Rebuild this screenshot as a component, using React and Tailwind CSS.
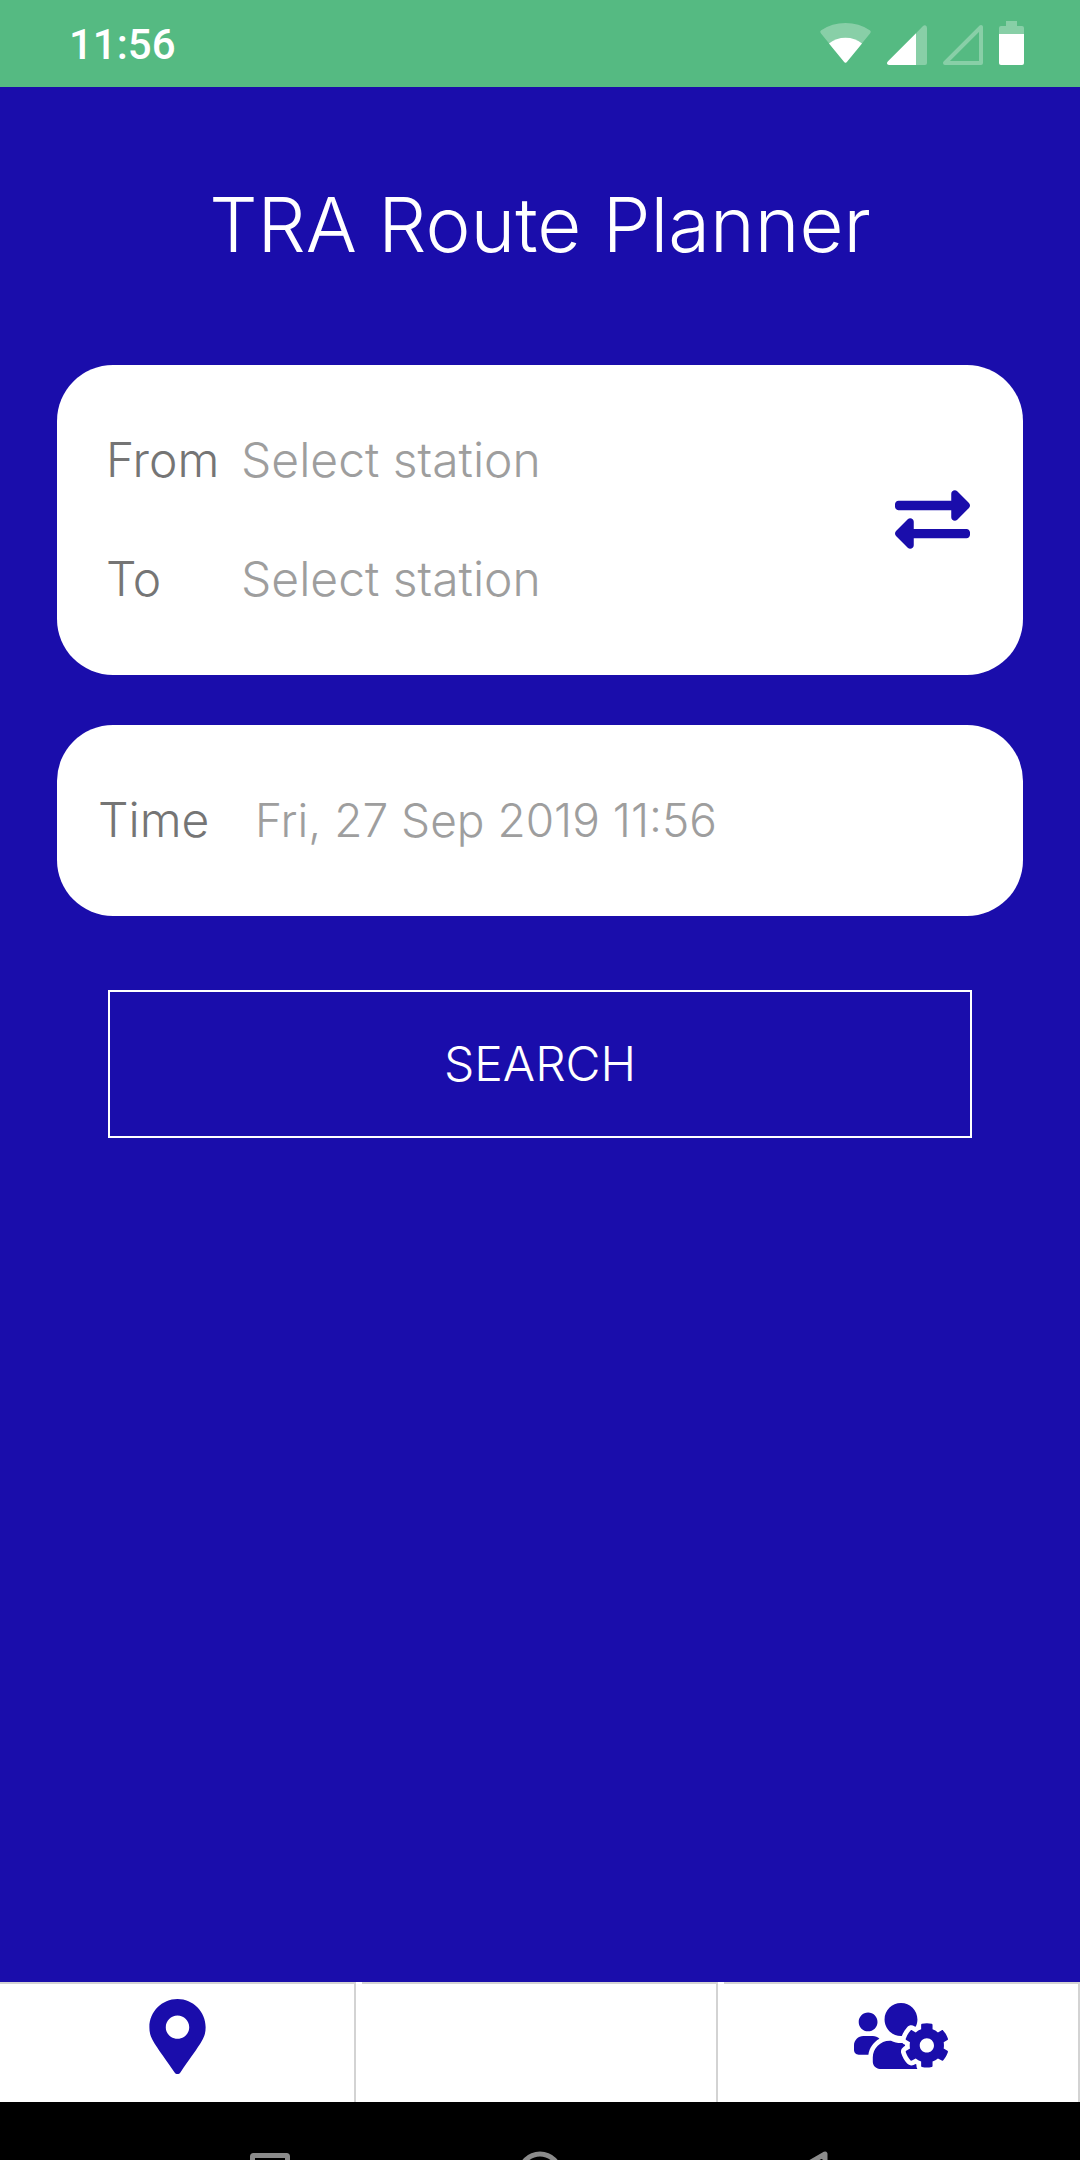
import React, { useState } from "react";
import { FaExchangeAlt, FaMapMarkerAlt, FaUsersCog } from "react-icons/fa";

function StatusBar() {
  return (
    <header className="flex h-[87px] items-center justify-between bg-[#55ba82] pr-14 pb-px pl-[69px] text-white">
      <time className="pt-1 font-['Roboto',sans-serif] text-[42px] leading-[48px] font-medium">
        11:56
      </time>
      <div className="flex items-center gap-4">
        <svg width="51" height="44" viewBox="0 0 51 44" fill="currentColor" aria-label="Wi-Fi">
          <path
            opacity=".3"
            d="M1 12.5Q-.6 10.600 1.200 9.200Q12 2 25.500 2T49.800 9.200Q51.600 10.600 50 12.500L27 40.800Q25.500 42.600 24 40.800Z"
          />
          <path d="M9 22.500Q16 16.700 25.500 16.700T42 22.500L27 40.800Q25.500 42.600 24 40.800Z" />
        </svg>
        <svg width="40" height="44" viewBox="0 0 40 44" fill="currentColor" aria-label="Signal, SIM 1">
          <path
            opacity=".3"
            d="M29 44V12.300L36 5Q37 4 38.200 4.200Q40 4.700 40 7V42Q40 44 38 44Z"
          />
          <path d="M29 12.300V44H2Q-.2 44 0 42Q0 41.300 1 40.300Z" />
        </svg>
        <svg
          width="40"
          height="44"
          viewBox="0 0 40 44"
          fill="none"
          stroke="currentColor"
          strokeWidth="4"
          strokeLinejoin="round"
          aria-label="No signal, SIM 2"
        >
          <path opacity=".3" d="M38 6V42H2Z" />
        </svg>
        <svg width="25" height="44" viewBox="0 0 25 44" fill="currentColor" aria-label="Battery">
          <path opacity=".3" d="M7 0H18V5H23Q25 5 25 7V13H0V7Q0 5 2 5H7Z" />
          <path d="M0 13H25V42Q25 44 23 44H2Q0 44 0 42Z" />
        </svg>
      </div>
    </header>
  );
}

function StationRow({ id, label, value, onChange }) {
  return (
    <div className="flex h-[119px] items-center">
      <label htmlFor={id} className="w-[135px] shrink-0 text-[#757575]">
        {label}
      </label>
      <input
        id={id}
        type="text"
        placeholder="Select station"
        value={value}
        onChange={(e) => onChange(e.target.value)}
        className="w-full min-w-0 bg-transparent text-[#757575] outline-none placeholder:text-[#9e9e9e]"
      />
    </div>
  );
}

function TabButton({ label, children }) {
  return (
    <button
      type="button"
      aria-label={label}
      className="flex flex-1 items-center justify-center border-t-2 border-r-2 border-[#d3d3d3] bg-white pb-3.5 text-[#1a0dab]"
    >
      {children}
    </button>
  );
}

function SystemNav() {
  return (
    <div className="h-[58px] overflow-hidden bg-black px-[12.5%]">
      <div className="grid grid-cols-3 justify-items-center pt-12 text-[#8c8c8c]">
        <button type="button" aria-label="Recent apps">
          <svg width="44" height="48" viewBox="0 0 44 48" fill="none" stroke="currentColor" strokeWidth="5" strokeLinejoin="round">
            <rect x="4.500" y="5.500" width="35" height="37" rx="1" />
          </svg>
        </button>
        <button type="button" aria-label="Home">
          <svg width="46" height="48" viewBox="0 0 46 48" fill="none" stroke="currentColor" strokeWidth="5">
            <circle cx="23" cy="24" r="20" />
          </svg>
        </button>
        <button type="button" aria-label="Back">
          <svg
            width="44"
            height="48"
            viewBox="0 0 44 48"
            fill="none"
            stroke="currentColor"
            strokeWidth="5"
            strokeLinejoin="round"
          >
            <path d="M37 4V44L2 24Z" />
          </svg>
        </button>
      </div>
    </div>
  );
}

export default function App() {
  const [from, setFrom] = useState("");
  const [to, setTo] = useState("");
  const [time, setTime] = useState("Fri, 27 Sep 2019 11:56");

  const swap = () => {
    setFrom(to);
    setTo(from);
  };

  return (
    <div className="flex min-h-screen flex-col bg-[#1a0dab] font-['Inter',sans-serif] text-[48px] leading-[60px] font-light">
      <StatusBar />
      <main className="flex flex-1 flex-col px-[57px]">
        <h1 className="pt-[92px] pb-24 text-center text-[76px] leading-[90px] text-white">
          TRA Route Planner
        </h1>
        <form onSubmit={(e) => e.preventDefault()}>
          <section className="flex items-center rounded-[56px] bg-white pt-[35px] pr-[53px] pb-[37px] pl-[49px]">
            <div className="flex-1">
              <StationRow id="from" label="From" value={from} onChange={setFrom} />
              <StationRow id="to" label="To" value={to} onChange={setTo} />
            </div>
            <button type="button" aria-label="Swap stations" onClick={swap} className="text-[#1a0dab]">
              <FaExchangeAlt size={75} />
            </button>
          </section>

          <section className="mt-[50px] flex h-[191px] items-center rounded-[56px] bg-white pr-[53px] pb-0.5 pl-[41px]">
            <label htmlFor="time" className="w-[157px] shrink-0 text-[#757575]">
              Time
            </label>
            <input
              id="time"
              type="text"
              value={time}
              onChange={(e) => setTime(e.target.value)}
              className="w-full min-w-0 bg-transparent text-[46px] text-[#9e9e9e] outline-none"
            />
          </section>

          <div className="mt-[74px] px-[51px]">
            <button
              type="submit"
              className="flex h-[148px] w-full items-center justify-center border-2 border-white text-white"
            >
              SEARCH
            </button>
          </div>
        </form>
      </main>

      <nav className="flex h-[120px] gap-1.5 bg-white">
        <TabButton label="Map">
          <FaMapMarkerAlt size={75} />
        </TabButton>
        <TabButton label="Search" />
        <TabButton label="Account settings">
          <FaUsersCog size={94} />
        </TabButton>
      </nav>
      <SystemNav />
    </div>
  );
}
